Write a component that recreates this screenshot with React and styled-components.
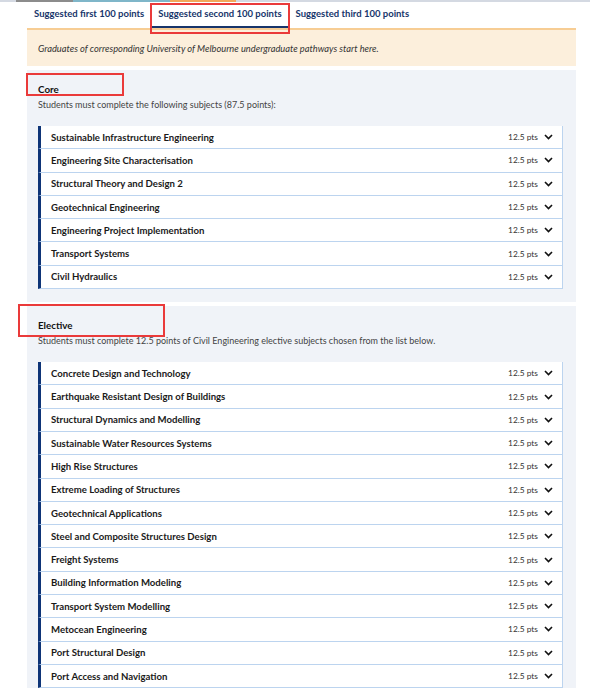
import styled, { createGlobalStyle } from "styled-components";

const GlobalStyle = createGlobalStyle`
    body {
        margin: 0;
        background: #fff;
        font-family: Lato, "Open Sans", sans-serif;
        color: #222;
    }
`
const Page = styled.div`
    position: relative;
    width: 600px;
    height: 688px;
    overflow: hidden;
`
const Strip = styled.div`
    display: flex;
    height: 2px;
    width: 590px;
    background: #d4d9e2;
`
const StripPart = styled.div`
    height: 2px;
    width: ${props => props.w}px;
    margin-left: ${props => props.ml || 0}px;
    background: ${props => props.color};
`
const Content = styled.div`
    margin-left: 27px;
    width: 549px;
`
const Tabs = styled.div`
    display: flex;
    height: 26px;
    padding-left: 1px;
    gap: 2px;
`
const Tab = styled.div`
    padding: 0 6px;
    font-size: 9.5px;
    font-weight: 700;
    color: #17356b;
    line-height: 24px;
    height: 24px;
    border-bottom: 2px solid ${props => props.active ? "#17356b" : "transparent"};
`
const Notice = styled.div`
    background: #fcefdc;
    border-top: 2px solid #f7cd94;
    padding: 0 11px;
    height: 36px;
    display: flex;
    align-items: center;
    font-size: 9.3px;
    font-style: italic;
    color: #333;
`
const Section = styled.section`
    background: #f0f3f8;
    margin-top: 4px;
    padding: 12px 13px 13px 11px;
`
const SectionTitle = styled.h3`
    margin: 0;
    font-size: 9.8px;
    font-weight: 700;
    color: #111;
    line-height: 14px;
`
const SectionText = styled.p`
    margin: 2px 0 14px;
    font-size: 9px;
    color: #444;
    line-height: 14px;
`
const List = styled.div`
    display: flex;
    flex-direction: column;
`
const Row = styled.div`
    display: flex;
    align-items: center;
    justify-content: space-between;
    height: 22.3px;
    background: #fff;
    border-left: 3px solid #0e3477;
    border-right: 1px solid #bcd4ef;
    border-bottom: 1px solid #bcd4ef;
    padding: 0 9px 0 10px;
`
const Name = styled.span`
    font-size: 9.6px;
    font-weight: 700;
    color: #1a1a1a;
`
const Points = styled.span`
    display: flex;
    align-items: center;
    gap: 6px;
    font-size: 8.4px;
    color: #333;
`
const Mark = styled.div`
    position: absolute;
    left: ${props => props.x}px;
    top: ${props => props.y}px;
    width: ${props => props.w}px;
    height: ${props => props.h}px;
    border: 2px solid #ea3a3a;
    box-sizing: border-box;
    pointer-events: none;
`

const core = [
    "Sustainable Infrastructure Engineering",
    "Engineering Site Characterisation",
    "Structural Theory and Design 2",
    "Geotechnical Engineering",
    "Engineering Project Implementation",
    "Transport Systems",
    "Civil Hydraulics",
]
const elective = [
    "Concrete Design and Technology",
    "Earthquake Resistant Design of Buildings",
    "Structural Dynamics and Modelling",
    "Sustainable Water Resources Systems",
    "High Rise Structures",
    "Extreme Loading of Structures",
    "Geotechnical Applications",
    "Steel and Composite Structures Design",
    "Freight Systems",
    "Building Information Modeling",
    "Transport System Modelling",
    "Metocean Engineering",
    "Port Structural Design",
    "Port Access and Navigation",
]

function Chevron(){
    return (
        <svg width="9" height="6" viewBox="0 0 9 6">
            <polyline points="1,1 4.5,4.6 8,1" fill="none" stroke="#111" strokeWidth="1.6" />
        </svg>
    )
}

function SubjectList({ items }){
    return (
        <List>
            {items.map(name =>
                <Row key={name}>
                    <Name>{name}</Name>
                    <Points>12.5 pts <Chevron/></Points>
                </Row>
            )}
        </List>
    )
}

export default function App(){
    return (
        <Page>
            <GlobalStyle/>
            <Strip>
                <StripPart ml={16} w={57} color="#8c8c8c"/>
                <StripPart w={97} color="#7fb6c9"/>
                <StripPart w={66} color="#f2a85a"/>
            </Strip>
            <Content>
                <Tabs>
                    <Tab>Suggested first 100 points</Tab>
                    <Tab active>Suggested second 100 points</Tab>
                    <Tab>Suggested third 100 points</Tab>
                </Tabs>
                <Notice>
                    Graduates of corresponding University of Melbourne undergraduate pathways start here.
                </Notice>
                <Section>
                    <SectionTitle>Core</SectionTitle>
                    <SectionText>Students must complete the following subjects (87.5 points):</SectionText>
                    <SubjectList items={core}/>
                </Section>
                <Section>
                    <SectionTitle>Elective</SectionTitle>
                    <SectionText>Students must complete 12.5 points of Civil Engineering elective subjects chosen from the list below.</SectionText>
                    <SubjectList items={elective}/>
                </Section>
            </Content>
            <Mark x={150} y={3} w={140} h={31}/>
            <Mark x={26} y={73} w={98} h={23}/>
            <Mark x={18} y={304} w={147} h={33}/>
        </Page>
    )
}
